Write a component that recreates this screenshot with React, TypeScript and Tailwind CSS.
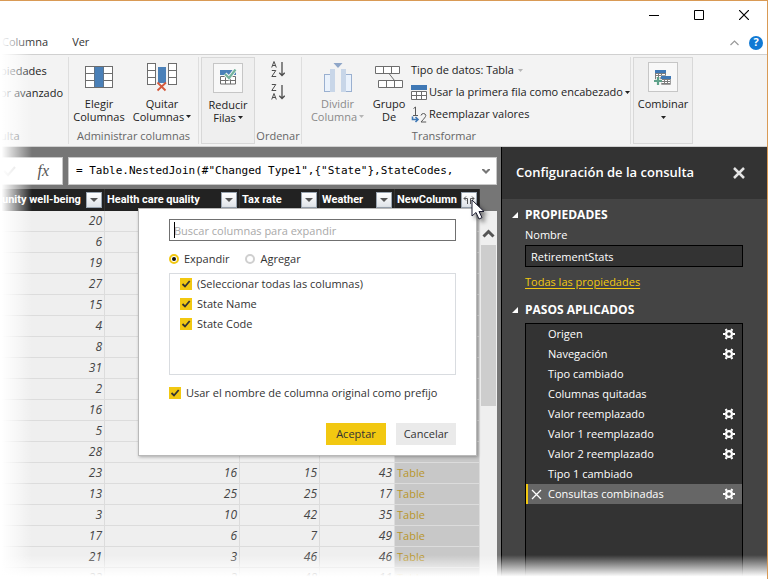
import { useState } from "react";
import type { ReactNode } from "react";

const SANS = "font-['Open_Sans','Noto_Sans',sans-serif]";

type Row = { wellBeing: number; rest?: [number, number, number] };

const ROWS: Row[] = [
  { wellBeing: 20 },
  { wellBeing: 6 },
  { wellBeing: 19 },
  { wellBeing: 27 },
  { wellBeing: 15 },
  { wellBeing: 4 },
  { wellBeing: 8 },
  { wellBeing: 31 },
  { wellBeing: 2 },
  { wellBeing: 16 },
  { wellBeing: 5 },
  { wellBeing: 28, rest: [7, 37, 27] },
  { wellBeing: 23, rest: [16, 15, 43] },
  { wellBeing: 13, rest: [25, 25, 17] },
  { wellBeing: 3, rest: [10, 42, 35] },
  { wellBeing: 17, rest: [6, 7, 49] },
  { wellBeing: 21, rest: [3, 46, 46] },
  { wellBeing: 22, rest: [2, 48, 11] },
];

const STEPS = [
  { name: "Origen", gear: true },
  { name: "Navegación", gear: true },
  { name: "Tipo cambiado", gear: false },
  { name: "Columnas quitadas", gear: false },
  { name: "Valor reemplazado", gear: true },
  { name: "Valor 1 reemplazado", gear: true },
  { name: "Valor 2 reemplazado", gear: true },
  { name: "Tipo 1 cambiado", gear: false },
  { name: "Consultas combinadas", gear: true },
];

function Caret({ color = "#222" }: { color?: string }) {
  return (
    <svg width="5" height="3" viewBox="0 0 5 3" className="inline-block shrink-0">
      <path d="M0 0h5L2.5 3z" fill={color} />
    </svg>
  );
}

function Divider() {
  return <div className="w-px self-stretch bg-[#dedede]" />;
}

function ElegirIcon() {
  return (
    <svg width="28" height="22" viewBox="0 0 28 22">
      <rect x=".5" y=".5" width="27" height="21" fill="#fff" stroke="#6d6d6d" />
      <path d="M1 7.500h26M1 14.500h26" stroke="#6d6d6d" />
      <rect x="9" y="1" width="10" height="20" fill="#4a80b8" />
      <path d="M9.500 1v20M18.500 1v20" stroke="#6d6d6d" opacity=".6" />
    </svg>
  );
}

function QuitarIcon() {
  return (
    <svg width="30" height="30" viewBox="0 0 30 30">
      <g fill="#fff" stroke="#6d6d6d">
        <rect x=".5" y="1.500" width="8" height="21" />
        <rect x="21.500" y="1.500" width="8" height="21" />
        <path d="M1 8.500h7M1 15.500h7M22 8.500h7M22 15.500h7" />
      </g>
      <rect x="11" y="5" width="8" height="16" fill="#4a80b8" />
      <path d="M10.500 20.500l8 8M19 20.500l-8.500 8" stroke="#d4593c" strokeWidth="1.800" />
    </svg>
  );
}

function ReducirIcon() {
  return (
    <svg width="18" height="18" viewBox="0 0 18 18">
      <rect x="1" y="1" width="16" height="5" fill="#4a80b8" />
      <path d="M1.500 7.500h15v7.500h-15zM1.500 11.500h15M6.500 7.500v7.500M11.500 7.500v7.500" fill="#fff" stroke="#6d6d6d" />
      <path d="M6 5l4 4 6.500-8.500" fill="none" stroke="#f8f8f8" strokeWidth="4" />
      <path d="M6 5l4 4 6.500-8.500" fill="none" stroke="#74b39c" strokeWidth="2.200" />
    </svg>
  );
}

function SortIcon({ desc = false }: { desc?: boolean }) {
  return (
    <svg width="14" height="17" viewBox="0 0 14 17" fill="none" stroke="#4d4d4d">
      <g transform={desc ? "translate(0 9)" : "translate(0 0)"}>
        <path d="M.7 6.500l2.300-6 2.300 6M1.500 4.500h3" />
      </g>
      <g transform={desc ? "translate(0 -9)" : "translate(0 0)"}>
        <path d="M.8 9.500h4L.8 15.500h4.400" />
      </g>
      <path d="M11 1v13.500M8.300 11.800l2.700 2.700 2.700-2.700" strokeWidth="1.300" />
    </svg>
  );
}

function DividirIcon() {
  return (
    <svg width="28" height="30" viewBox="0 0 28 30">
      <path d="M9.500 1h9L14 6z" fill="#8fa6c8" />
      <rect x=".5" y="12.500" width="6" height="17" fill="#eaf2fc" stroke="#9ab0d0" />
      <rect x="21.500" y="12.500" width="6" height="17" fill="#eaf2fc" stroke="#9ab0d0" />
      <rect x="6" y="7" width="5" height="23" fill="#c8d6e8" />
      <rect x="17" y="7" width="5" height="23" fill="#c8d6e8" />
    </svg>
  );
}

function GrupoIcon() {
  return (
    <svg width="28" height="24" viewBox="0 0 28 24" fill="#fff" stroke="#6d6d6d">
      <path d="M.5 1.500h24v7h-24zM8.500 1.500v7M16.500 1.500v7" />
      <path d="M3.500 15.500h24v7h-24zM11.500 15.500v7M19.500 15.500v7" />
      <path d="M14 8.500l5.500 7" />
    </svg>
  );
}

function HeaderRowIcon() {
  return (
    <svg width="16" height="16" viewBox="0 0 16 16">
      <rect width="16" height="5" y="1" fill="#3f78b5" />
      <path d="M.5 7.500h15v8H.5zM.5 11.500h15M5.500 7.500v8M10.500 7.500v8" fill="#fff" stroke="#6d6d6d" />
    </svg>
  );
}

function ReplaceIcon() {
  return (
    <svg width="16" height="17" viewBox="0 0 16 17" fill="none">
      <path d="M2.500 2.500L4.500 1v8.500M2 9.500h5" stroke="#5a5a5a" />
      <path d="M10 9.500q.5-2 2.500-2t2.300 2q0 1.500-4.800 6.500h5.200" stroke="#5a5a5a" />
      <path d="M1.500 10.500v3h5M4.500 11l2.500 2.500L4.500 16" stroke="#3f78b5" strokeWidth="1.600" />
    </svg>
  );
}

function CombinarIcon() {
  return (
    <svg width="18" height="17" viewBox="0 0 18 17">
      <rect x="1" y="1" width="11" height="10" fill="#7d7d7d" />
      <rect x="1" y="1" width="11" height="3" fill="#3f78b5" />
      <path d="M2 5h2v1H2zM5 5h2v1H5zM8 5h3v1H8zM2 7h2v1H2zM5 7h2v1H5zM2 9h2v1H2z" fill="#fff" />
      <rect x="7" y="7" width="10" height="9" fill="#7d7d7d" stroke="#f8f8f8" strokeWidth=".6" />
      <rect x="7" y="7" width="10" height="3" fill="#3f78b5" />
      <path d="M8 11h2v1H8zM11 11h2v1h-2zM14 11h2v1h-2zM8 13h2v1H8zM11 13h2v1h-2zM14 13h2v1h-2z" fill="#fff" />
      <path d="M4 8v8M0 12h8" stroke="#f8f8f8" strokeWidth="3.500" />
      <path d="M4 8v8M0 12h8" stroke="#5fa28a" strokeWidth="2.200" />
    </svg>
  );
}

function GearIcon() {
  return (
    <svg width="12" height="12" viewBox="0 0 12 12">
      <circle cx="6" cy="6" r="2.900" fill="none" stroke="#fff" strokeWidth="2.200" />
      <path d="M3.600 2.800L2.800 1M8.400 2.800L9.200 1M2.200 6H0M9.800 6H12M3.600 9.200L2.800 11M8.400 9.200L9.200 11" stroke="#fff" strokeWidth="2.200" />
    </svg>
  );
}

function BigButton({
  icon,
  lines,
  width,
  muted = false,
  caret = false,
}: {
  icon: ReactNode;
  lines: [string, string];
  width: string;
  muted?: boolean;
  caret?: boolean;
}) {
  return (
    <button type="button" disabled={muted} className={`flex flex-col items-center ${width} ${muted ? "text-[#8a8a8a]" : "text-[#222]"}`}>
      <span className="flex h-10 items-center justify-center">{icon}</span>
      <span className="leading-[13px]">{lines[0]}</span>
      <span className="flex items-center gap-0.5 whitespace-nowrap leading-[13px]">
        {lines[1]}
        {caret && <Caret color={muted ? "#b5b5b5" : "#222"} />}
      </span>
    </button>
  );
}

function GroupLabel({ children }: { children: ReactNode }) {
  return <div className="mt-auto text-center leading-[13px] text-[#666]">{children}</div>;
}

function CheckRow({ label }: { label: string }) {
  const [on, setOn] = useState(true);
  return (
    <label className="flex h-5 items-center gap-[5px] whitespace-nowrap">
      <span className="relative block size-3">
        <input
          type="checkbox"
          checked={on}
          onChange={() => setOn(!on)}
          className="block size-3 appearance-none border border-[#f2c811] checked:bg-[#f2c811]"
        />
        {on && (
          <svg viewBox="0 0 12 12" className="pointer-events-none absolute inset-0 size-3">
            <path d="M2.500 6l2.500 2.500L9.700 3" fill="none" stroke="#333" strokeWidth="1.800" />
          </svg>
        )}
      </span>
      {label}
    </label>
  );
}

function Radio({ label, checked, onChange }: { label: string; checked: boolean; onChange: () => void }) {
  return (
    <label className="flex items-center gap-[5px]">
      <span className="relative block size-[10px]">
        <input
          type="radio"
          name="mode"
          checked={checked}
          onChange={onChange}
          className="block size-[10px] appearance-none rounded-full border-2 border-[#cfcfcf] checked:border-[#f2c811]"
        />
        {checked && <span className="pointer-events-none absolute inset-[3px] rounded-full bg-[#111]" />}
      </span>
      {label}
    </label>
  );
}

function HeaderCell({ children, expand = false }: { children: ReactNode; expand?: boolean }) {
  return (
    <th scope="col" className="overflow-hidden border-r border-[#333] p-0 text-left font-bold">
      <div className="flex h-[22px] items-center justify-between px-0.5 whitespace-nowrap">
        <span>{children}</span>
        <button type="button" aria-label="Filtro" className="flex h-4 w-4 shrink-0 items-center justify-center border border-[#9aa5b1] bg-linear-to-b from-white to-[#dfe3e8]">
          {expand ? (
            <svg width="12" height="10" viewBox="0 0 12 10" fill="none" stroke="#555">
              <path d="M4.500 9V3.500H1M3 1.500l-2 2 2 2M7.500 9V3.500H11M9 1.500l2 2-2 2" />
            </svg>
          ) : (
            <svg width="8" height="4" viewBox="0 0 8 4">
              <path d="M0 0h8L4 4z" fill="#555" />
            </svg>
          )}
        </button>
      </div>
    </th>
  );
}

function Ribbon() {
  return (
    <div className="flex h-[93px] shrink-0 border-y border-[#d0d0d0] bg-[#f3f3f3] py-0.5 text-[11px] whitespace-nowrap text-[#222]">
      <div className="flex w-[68px] flex-col pb-0.5">
        <div className="flex flex-col items-start">
          <button type="button" className="h-[22px] pt-1.5 leading-4">piedades</button>
          <button type="button" className="h-[22px] pt-1.5 leading-4">or avanzado</button>
        </div>
        <div className="mt-auto leading-[13px] text-[#666]">ulta</div>
      </div>
      <Divider />
      <div className="flex w-[129px] flex-col pb-0.5">
        <div className="flex">
          <BigButton icon={<ElegirIcon />} lines={["Elegir", "Columnas"]} width="w-[60px]" />
          <BigButton icon={<QuitarIcon />} lines={["Quitar", "Columnas"]} width="w-[66px]" caret />
        </div>
        <GroupLabel>Administrar columnas</GroupLabel>
      </div>
      <Divider />
      <div className="ml-0.5 flex w-[54px] justify-center border border-[#d8d8d8] bg-[#efefef]">
        <BigButton
          icon={<span className="flex size-[30px] items-center justify-center border border-[#c6c6c6] bg-[#f8f8f8]"><ReducirIcon /></span>}
          lines={["Reducir", "Filas"]}
          width="w-[52px]"
          caret
        />
      </div>
      <div className="flex w-[46px] flex-col items-center pb-0.5">
        <button type="button" aria-label="Orden ascendente" className="mt-1"><SortIcon /></button>
        <button type="button" aria-label="Orden descendente" className="mt-1.5"><SortIcon desc /></button>
        <GroupLabel>Ordenar</GroupLabel>
      </div>
      <Divider />
      <div className="flex w-[328px] flex-col pb-0.5">
        <div className="flex">
          <BigButton icon={<DividirIcon />} lines={["Dividir", "Columna"]} width="w-[71px]" muted caret />
          <BigButton icon={<GrupoIcon />} lines={["Grupo", "De"]} width="w-[32px]" />
          <div className="ml-1.5 flex flex-col pt-0.5">
            <button type="button" className="flex h-[22px] items-center gap-1">Tipo de datos: Tabla<Caret color="#b5b5b5" /></button>
            <button type="button" className="flex h-[22px] items-center gap-0.5"><HeaderRowIcon />Usar la primera fila como encabezado<Caret /></button>
            <button type="button" className="flex h-[22px] items-center gap-0.5"><ReplaceIcon />Reemplazar valores</button>
          </div>
        </div>
        <div className="mt-auto flex flex-col pr-11">
          <GroupLabel>Transformar</GroupLabel>
        </div>
      </div>
      <Divider />
      <button type="button" className="ml-0.5 flex w-[60px] flex-col items-center border border-[#d8d8d8] bg-[#efefef] pt-1">
        <span className="mb-1 flex size-[30px] items-center justify-center border border-[#c6c6c6] bg-[#f8f8f8]"><CombinarIcon /></span>
        <span className="leading-4">Combinar</span>
        <span className="mt-1 flex"><Caret /></span>
      </button>
    </div>
  );
}

function ExpandMenu() {
  const [mode, setMode] = useState("expand");
  return (
    <div className="absolute top-[19px] right-6 flex w-[339px] flex-col border border-[#b9b9b9] bg-white pt-2.5 pr-5 pb-2.5 pl-[30px] text-[11px] text-[#333] shadow-[1px_1px_3px_rgba(0,0,0,0.3)]">
      <div className="relative">
        <input
          aria-label="Buscar columnas"
          placeholder="Buscar columnas para expandir"
          className="block h-[22px] w-full border border-[#707070] bg-white px-1 text-[11px] outline-none placeholder:text-[#a9a9a9]"
        />
        <span className="absolute top-[3px] left-[5px] h-4 w-px bg-black" />
      </div>
      <div className="mt-2 flex h-5 items-center gap-4">
        <Radio label="Expandir" checked={mode === "expand"} onChange={() => setMode("expand")} />
        <Radio label="Agregar" checked={mode === "add"} onChange={() => setMode("add")} />
      </div>
      <div className="mt-1 h-[102px] border border-[#d9dce0] pl-2.5">
        <CheckRow label="(Seleccionar todas las columnas)" />
        <CheckRow label="State Name" />
        <CheckRow label="State Code" />
      </div>
      <div className="mt-2">
        <CheckRow label="Usar el nombre de columna original como prefijo" />
      </div>
      <div className="mt-5 flex justify-end gap-2.5">
        <button type="button" className="h-[22px] w-[60px] bg-[#f2c811]">Aceptar</button>
        <button type="button" className="h-[22px] w-[60px] bg-[#eaeaea]">Cancelar</button>
      </div>
    </div>
  );
}

function Grid() {
  const num = "border-r border-b border-[#dcdcdc] bg-[#efefef] py-0 pr-0.5 pl-0 text-right italic";
  return (
    <div className="relative mt-1 flex min-h-0 flex-1 pr-1">
      <div className="min-w-0 flex-1 overflow-hidden">
        <table className="w-full table-fixed border-separate border-spacing-0 text-[12px] text-[#444]">
          <colgroup>
            <col />
            <col className="w-[135px]" />
            <col className="w-[80px]" />
            <col className="w-[75px]" />
            <col className="w-[85px]" />
          </colgroup>
          <thead className="bg-[#222] font-[Roboto,sans-serif] text-[11px] text-white">
            <tr>
              <HeaderCell>unity well-being</HeaderCell>
              <HeaderCell>Health care quality</HeaderCell>
              <HeaderCell>Tax rate</HeaderCell>
              <HeaderCell>Weather</HeaderCell>
              <HeaderCell expand>NewColumn</HeaderCell>
            </tr>
          </thead>
          <tbody>
            {ROWS.map((row, i) => (
              <tr key={i} className="h-[21px] leading-5">
                <td className={num}>{row.wellBeing}</td>
                <td className={num}>{row.rest?.[0]}</td>
                <td className={num}>{row.rest?.[1]}</td>
                <td className={num}>{row.rest?.[2]}</td>
                <td className="border-r border-b border-[#dcdcdc] bg-[#c8c8c8] py-0 pr-0 pl-0.5 text-[11px] text-[#b8962b]">{row.rest && "Table"}</td>
              </tr>
            ))}
          </tbody>
        </table>
      </div>
      <div className="mt-[22px] flex w-[17px] flex-col items-center bg-[#efefef]">
        <svg width="13" height="34" viewBox="0 0 13 34" className="shrink-0">
          <path d="M1.500 25.500l5-5 5 5" fill="none" stroke="#555" strokeWidth="3" />
        </svg>
        <div className="h-[161px] w-[15px] bg-[#cdcdcd]" />
      </div>
      <ExpandMenu />
      <svg width="16" height="26" viewBox="0 0 16 26" className="absolute top-2.5 right-3.5 drop-shadow-[3px_3px_2px_rgba(0,0,0,0.5)]">
        <path d="M1 1v16l4-3.500 3 6.500 3-1.400-3-6.100h5z" fill="#fff" stroke="#1c1c30" />
      </svg>
    </div>
  );
}

function SectionTitle({ children }: { children: ReactNode }) {
  return (
    <h3 className="flex h-5 items-center text-[12px] font-bold text-white">
      <svg width="6" height="6" viewBox="0 0 6 6" className="mr-[7px] ml-2.5">
        <path d="M6 0v6H0z" fill="#fff" />
      </svg>
      {children}
    </h3>
  );
}

function QueryPanel() {
  return (
    <aside className="flex w-[266px] shrink-0 flex-col border-l border-black bg-[#444] text-[11px] text-white">
      <div className="flex h-[52px] shrink-0 items-center justify-between bg-[#333] pr-[22px] pl-3.5">
        <h2 className="text-[13px] font-semibold">Configuración de la consulta</h2>
        <button type="button" aria-label="Cerrar" className="flex">
          <svg width="12" height="12" viewBox="0 0 12 12">
            <path d="M1 1l10 10M11 1L1 11" stroke="#e4e4e4" strokeWidth="2.500" />
          </svg>
        </button>
      </div>
      <div className="flex min-h-0 flex-1 flex-col pt-1.5">
        <SectionTitle>PROPIEDADES</SectionTitle>
        <div className="flex flex-col items-start pr-6 pl-[23px]">
          <label htmlFor="query-name" className="leading-5">Nombre</label>
          <input id="query-name" defaultValue="RetirementStats" className="block h-[22px] w-full border border-black bg-[#333] px-[5px] text-[11px]" />
          <a href="#props" className="mt-[5px] leading-5 text-[#f2c811] underline underline-offset-2">Todas las propiedades</a>
        </div>
        <div className="mt-2">
          <SectionTitle>PASOS APLICADOS</SectionTitle>
        </div>
        <ul className="mt-[3px] mr-6 ml-[23px] min-h-0 flex-1 border-x border-t border-black bg-[#333]">
          {STEPS.map((step, i) => {
            const selected = i === STEPS.length - 1;
            return (
              <li key={step.name} className={`flex h-5 items-center border-l-2 pr-[7px] ${selected ? "border-[#f2c811] bg-[#666]" : "border-transparent"}`}>
                <span className="flex w-5 items-center pl-[3px]">
                  {selected && (
                    <svg width="11" height="11" viewBox="0 0 11 11">
                      <path d="M1 1l9 9M10 1L1 10" stroke="#fff" strokeWidth="1.300" />
                    </svg>
                  )}
                </span>
                <span className="flex-1">{step.name}</span>
                {step.gear && (
                  <button type="button" aria-label={`Configurar ${step.name}`} className="flex"><GearIcon /></button>
                )}
              </li>
            );
          })}
        </ul>
      </div>
    </aside>
  );
}

export default function App() {
  return (
    <div className={`relative flex h-screen w-full flex-col overflow-hidden border-t border-r border-[#d99a55] bg-white ${SANS}`}>
      <div className="flex h-7 shrink-0 items-center justify-end gap-[35px] pr-[18px]">
        <button type="button" aria-label="Minimizar" className="flex"><svg width="10" height="10" viewBox="0 0 10 10"><path d="M0 5.500h10" stroke="#000" /></svg></button>
        <button type="button" aria-label="Maximizar" className="flex"><svg width="10" height="10" viewBox="0 0 10 10"><path d="M.5.5h9v9h-9z" fill="none" stroke="#000" /></svg></button>
        <button type="button" aria-label="Cerrar ventana" className="flex"><svg width="10" height="10" viewBox="0 0 10 10"><path d="M0 0l10 10M10 0L0 10" stroke="#000" strokeWidth="1.200" /></svg></button>
      </div>
      <div className="flex h-[25px] shrink-0 items-center pt-0.5 text-[11px] text-[#333]">
        <button type="button" className="ml-0.5">Columna</button>
        <button type="button" className="ml-6">Ver</button>
        <button type="button" aria-label="Contraer cinta" className="ml-auto flex">
          <svg width="9" height="6" viewBox="0 0 9 6"><path d="M.5 5l4-4 4 4" fill="none" stroke="#999" strokeWidth="1.200" /></svg>
        </button>
        <button type="button" aria-label="Ayuda" className="mr-1 ml-2.5 flex size-3.5 items-center justify-center rounded-full bg-[#1079d4] text-[11px] font-bold text-white">?</button>
      </div>
      <Ribbon />
      <div className="flex min-h-0 flex-1">
        <main className="flex min-w-0 flex-1 flex-col bg-[#767676]">
          <div className="mt-2.5 mr-1 flex h-7 shrink-0 gap-[5px]">
            <div className="flex w-[63px] items-center justify-between border border-[#c8c8c8] bg-white pr-[13px] pl-0.5">
              <svg width="13" height="11" viewBox="0 0 13 11"><path d="M1 5l4 4 7-8" fill="none" stroke="#d5d5d5" strokeWidth="2" /></svg>
              <span className="font-['Liberation_Serif',serif] text-[16px] text-[#555] italic">fx</span>
            </div>
            <div className="flex min-w-0 flex-1 items-center border border-[#c8c8c8] bg-white pr-1.5 pl-[7px]">
              <input
                aria-label="Fórmula"
                defaultValue={'= Table.NestedJoin(#"Changed Type1",{"State"},StateCodes,'}
                className="min-w-0 flex-1 font-['DejaVu_Sans_Mono',monospace] text-[11px] text-black outline-none"
              />
              <svg width="8" height="5" viewBox="0 0 8 5"><path d="M0 0h2l2 2 2-2h2v1L4 5 0 1z" fill="#777" /></svg>
            </div>
          </div>
          <Grid />
        </main>
        <QueryPanel />
      </div>
      <div className="pointer-events-none absolute inset-y-0 left-0 w-8 bg-linear-to-r from-white from-5% to-transparent" />
      <div className="pointer-events-none absolute inset-x-0 bottom-0 h-6 bg-linear-to-t from-white from-10% to-transparent" />
    </div>
  );
}
